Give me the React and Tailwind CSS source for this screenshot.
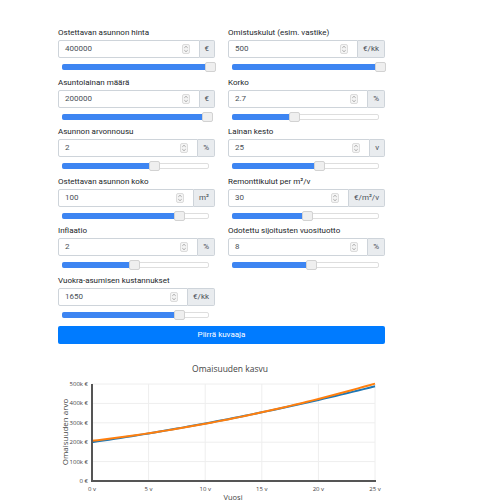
import React from "react";

const fields = [
  ["Ostettavan asunnon hinta", "400000", "€", 143],
  ["Omistuskulut (esim. vastike)", "500", "€/kk", 143],
  ["Asuntolainan määrä", "200000", "€", 140],
  ["Korko", "2.7", "%", 57],
  ["Asunnon arvonnousu", "2", "%", 87],
  ["Lainan kesto", "25", "v", 82],
  ["Ostettavan asunnon koko", "100", "m²", 112],
  ["Remonttikulut per m²/v", "30", "€/m²/v", 70],
  ["Inflaatio", "2", "%", 67],
  ["Odotettu sijoitusten vuosituotto", "8", "%", 74],
  ["Vuokra-asumisen kustannukset", "1650", "€/kk", 112],
];

function Spinner() {
  return (
    <svg width="8" height="10" viewBox="0 0 8 10" className="shrink-0">
      <rect x="0.5" y="0.5" width="7" height="9" rx="1.5" fill="#f4f4f4" stroke="#dcdcdc" />
      <path d="M2.3 3.8 L4 2.3 L5.7 3.8" fill="none" stroke="#9a9a9a" strokeWidth="0.8" />
      <path d="M2.3 6.2 L4 7.7 L5.7 6.2" fill="none" stroke="#9a9a9a" strokeWidth="0.8" />
    </svg>
  );
}

function Field({ label, value, unit, thumb }) {
  return (
    <div className="flex flex-col">
      <div className="text-[8px] leading-[12px] mb-[1px] text-[#212529]">{label}</div>
      <div className="flex h-[18px]">
        <div className="flex-1 flex items-center border border-[#ced4da] rounded-l-[2px] bg-white pl-[6px] pr-[9px]">
          <span className="flex-1 text-[8px] text-[#495057]">{value}</span>
          <Spinner />
        </div>
        <div className="flex items-center px-[5px] bg-[#e9ecef] border border-l-0 border-[#ced4da] rounded-r-[2px] text-[8px] text-[#495057]">
          {unit}
        </div>
      </div>
      <div className="relative ml-[4px] mt-[4px] h-[10px] w-[153px] flex items-center">
        <div className="h-[6px] w-[147px] rounded-[2px] bg-white border border-[#dedede]" />
        <div className="absolute left-0 top-[2px] h-[6px] rounded-l-[2px] bg-[#3d85f2]" style={{ width: thumb + 4 }} />
        <div className="absolute top-0 h-[10px] w-[11px] rounded-[2px] bg-[#efefef] border border-[#d2d2d2]" style={{ left: thumb }} />
      </div>
    </div>
  );
}

function Chart() {
  const X = (t) => 34 + (t / 25) * 283;
  const Y = (v) => 130 - (v / 500) * 97;
  const pts = (f) => {
    const a = [];
    for (let t = 0; t <= 25; t += 0.5) a.push(`${X(t).toFixed(2)},${Y(f(t)).toFixed(2)}`);
    return a.join(" ");
  };
  const blue = (t) => 200 + 8.4 * t + 0.125 * t * t;
  const orange = (t) => 207 + 6.8 * t + 0.2 * t * t;
  const yt = [0, 100, 200, 300, 400, 500];
  const xt = [0, 5, 10, 15, 20, 25];
  return (
    <svg width="360" height="150" viewBox="0 0 360 150" style={{ fontFamily: "'Open Sans', sans-serif" }}>
      {yt.slice(1).map((v) => (
        <line key={v} x1={34} x2={317} y1={Y(v)} y2={Y(v)} stroke="#eeeeee" strokeWidth="1" />
      ))}
      {xt.slice(1).map((t) => (
        <line key={t} x1={X(t)} x2={X(t)} y1={33} y2={130} stroke="#eeeeee" strokeWidth="1" />
      ))}
      <polyline points={pts(blue)} fill="none" stroke="#1f77b4" strokeWidth="2" />
      <polyline points={pts(orange)} fill="none" stroke="#ff7f0e" strokeWidth="2" />
      <line x1={34} x2={34} y1={33} y2={131} stroke="#555" strokeWidth="2" />
      <line x1={33} x2={318} y1={130} y2={130} stroke="#555" strokeWidth="2" />
      {yt.map((v) => (
        <text key={v} x={30} y={Y(v) + 2} fontSize="6" fill="#444" textAnchor="end">
          {v === 0 ? "0 €" : `${v}k €`}
        </text>
      ))}
      {xt.map((t) => (
        <text key={t} x={X(t)} y={140} fontSize="6" fill="#444" textAnchor="middle">
          {`${t} v`}
        </text>
      ))}
      <text x={172} y={21} fontSize="8.5" fill="#444" textAnchor="middle">Omaisuuden kasvu</text>
      <text x={10} y={81} fontSize="8" fill="#444" textAnchor="middle" transform="rotate(-90 10 81)">
        Omaisuuden arvo
      </text>
      <text x={175} y={149} fontSize="7.5" fill="#444" textAnchor="middle">Vuosi</text>
    </svg>
  );
}

export default function App() {
  return (
    <div className="w-[479px] h-[500px] overflow-hidden bg-white" style={{ fontFamily: "Roboto, 'Liberation Sans', sans-serif" }}>
      <div className="pl-[58px] pt-[27px] w-[385px]">
        <div className="grid grid-cols-2 gap-x-[13px] gap-y-[4.5px]">
          {fields.map(([l, v, u, t]) => (
            <Field key={l} label={l} value={v} unit={u} thumb={t} />
          ))}
        </div>
        <button className="mt-[6px] w-full h-[18px] bg-[#007bff] rounded-[2px] text-white text-[8px] flex items-center justify-center">
          Piirrä kuvaaja
        </button>
        <div className="mt-[7px]">
          <Chart />
        </div>
      </div>
    </div>
  );
}
